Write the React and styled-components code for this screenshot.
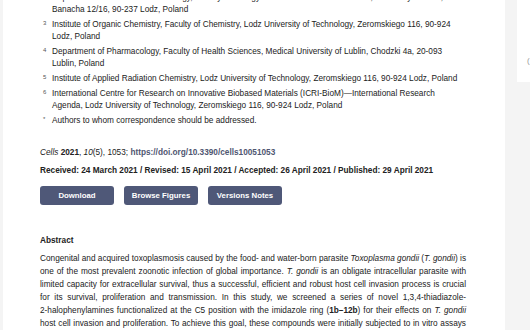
import styled, { createGlobalStyle } from "styled-components";

const Global = createGlobalStyle`
  html, body {
    margin: 0;
    padding: 0;
    background: #ffffff;
    font-family: "Liberation Sans", Arial, sans-serif;
    color: #222222;
  }
`;

const Page = styled.div`
  display: flex;
  width: 530px;
  height: 330px;
  overflow: hidden;
`;

const LeftEdge = styled.div`
  width: 3px;
  background: #f4f4f4;
  flex-shrink: 0;
`;

const Main = styled.div`
  width: 502px;
  flex-shrink: 0;
  padding: 0 39px 0 37px;
  box-sizing: border-box;
`;

const Side = styled.div`
  flex: 1;
  background: #f4f4f4;
  padding-left: 12px;
`;

const SideCard = styled.div`
  height: 82px;
  background: #ffffff;
  overflow: hidden;
`;

const SideGlyph = styled.span`
  display: block;
  padding: 56px 0 0 10px;
  font-size: 8px;
  color: #999;
`;

const Affiliations = styled.ul`
  list-style: none;
  margin: -8px 0 0;
  padding: 0 0 0 3px;
`;

const Affiliation = styled.li`
  display: flex;
  font-size: 8.25px;
  line-height: 12px;
  margin-bottom: 3px;
`;

const Mark = styled.sup`
  width: 9px;
  flex-shrink: 0;
  font-size: 6px;
  line-height: 8px;
  color: #555;
  vertical-align: top;
`;

const Cite = styled.p`
  margin: 20px 0 0;
  font-size: 8.25px;
  line-height: 12px;
`;

const Link = styled.a`
  font-weight: bold;
  color: #4f5671;
  text-decoration: none;
`;

const Dates = styled.p`
  margin: 6px 0 0;
  font-size: 8.25px;
  line-height: 12px;
  font-weight: bold;
`;

const Buttons = styled.div`
  display: flex;
  gap: 10px;
  margin-top: 9px;
`;

const Button = styled.button`
  width: 74px;
  height: 19px;
  border: none;
  border-radius: 3px;
  background: #4f5878;
  color: #ffffff;
  font-family: inherit;
  font-size: 7.8px;
  font-weight: bold;
  padding: 0;
`;

const Heading = styled.h2`
  margin: 30px 0 0;
  font-size: 8.25px;
  line-height: 12px;
  font-weight: bold;
`;

const Abstract = styled.p`
  margin: 5px 0 0;
  font-size: 8.25px;
  line-height: 13px;
  text-align: justify;
`;

const NoBreak = styled.span`
  white-space: nowrap;
`;

const affiliations = [
  ["2", "Department of Molecular Microbiology, Faculty of Biology and Environmental Protection, University of Lodz, Banacha 12/16, 90-237 Lodz, Poland"],
  ["3", "Institute of Organic Chemistry, Faculty of Chemistry, Lodz University of Technology, Zeromskiego 116, 90-924 Lodz, Poland"],
  ["4", "Department of Pharmacology, Faculty of Health Sciences, Medical University of Lublin, Chodzki 4a, 20-093 Lublin, Poland"],
  ["5", "Institute of Applied Radiation Chemistry, Lodz University of Technology, Zeromskiego 116, 90-924 Lodz, Poland"],
  ["6", "International Centre for Research on Innovative Biobased Materials (ICRI-BioM)—International Research Agenda, Lodz University of Technology, Zeromskiego 116, 90-924 Lodz, Poland"],
  ["*", "Authors to whom correspondence should be addressed."],
];

export default function App() {
  return (
    <>
      <Global />
      <Page>
        <LeftEdge />
        <Main>
          <Affiliations>
            {affiliations.map(([mark, text]) => (
              <Affiliation key={mark}>
                <Mark>{mark}</Mark>
                <span>{text}</span>
              </Affiliation>
            ))}
          </Affiliations>

          <Cite>
            <i>Cells</i> <b>2021</b>, <i>10</i>(5), 1053;{" "}
            <Link href="#">https://doi.org/10.3390/cells10051053</Link>
          </Cite>

          <Dates>
            Received: 24 March 2021 / Revised: 15 April 2021 / Accepted: 26 April 2021 / Published: 29 April 2021
          </Dates>

          <Buttons>
            <Button>Download</Button>
            <Button>Browse Figures</Button>
            <Button>Versions Notes</Button>
          </Buttons>

          <Heading>Abstract</Heading>
          <Abstract>
            Congenital and acquired toxoplasmosis caused by the food- and water-born parasite{" "}
            <i>Toxoplasma gondii</i> (<i>T. gondii</i>) is one of the most prevalent zoonotic infection of
            global importance. <i>T. gondii</i> is an obligate intracellular parasite with limited capacity
            for extracellular survival, thus a successful, efficient and robust host cell invasion process
            is crucial for its survival, proliferation and transmission. In this study, we screened a series
            of novel 1,3,4-thiadiazole-<NoBreak>2-halophenylamines</NoBreak> functionalized at the C5 position with the
            imidazole ring (<b>1b–12b</b>) for their effects on <i>T. gondii</i> host cell invasion and
            proliferation. To achieve this goal, these compounds were initially subjected to in vitro assays
            to assess their cytotoxicity.
          </Abstract>
        </Main>
        <Side>
          <SideCard>
            <SideGlyph>(</SideGlyph>
          </SideCard>
        </Side>
      </Page>
    </>
  );
}
